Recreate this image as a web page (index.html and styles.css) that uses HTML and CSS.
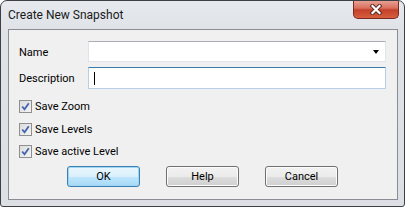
FILE: index.html
```html
<!DOCTYPE html>
<html lang="en">

<head>
    <meta charset="UTF-8">
    <title>Create New Snapshot</title>
    <link rel="stylesheet" href="styles.css">
</head>

<body>
    <div class="window">
        <div class="titlebar">
            <span class="title">Create New Snapshot</span>
            <button class="close">
                <svg width="14" height="11" viewBox="0 0 14 11">
                    <path d="M3.5 2 L10.5 9 M10.5 2 L3.5 9" stroke="#5a2a24" stroke-width="4" stroke-linecap="square"/>
                    <path d="M3.5 2 L10.5 9 M10.5 2 L3.5 9" stroke="#ffffff" stroke-width="2.2" stroke-linecap="square"/>
                </svg>
            </button>
        </div>
        <div class="panel">
            <div class="form">
                <label>Name</label>
                <div class="combo">
                    <span class="arrow"></span>
                </div>
                <label>Description</label>
                <div class="textbox focused"><span class="caret"></span></div>
            </div>
            <div class="checks">
                <div class="check"><span class="box"><svg width="9" height="9" viewBox="0 0 9 9"><path d="M1.2 4.5 L3.5 7.3 L7.8 1.2" fill="none" stroke="#4464b0" stroke-width="1.8"/></svg></span>Save Zoom</div>
                <div class="check"><span class="box"><svg width="9" height="9" viewBox="0 0 9 9"><path d="M1.2 4.5 L3.5 7.3 L7.8 1.2" fill="none" stroke="#4464b0" stroke-width="1.8"/></svg></span>Save Levels</div>
                <div class="check"><span class="box"><svg width="9" height="9" viewBox="0 0 9 9"><path d="M1.2 4.5 L3.5 7.3 L7.8 1.2" fill="none" stroke="#4464b0" stroke-width="1.8"/></svg></span>Save active Level</div>
            </div>
            <div class="buttons">
                <button class="btn default">OK</button>
                <button class="btn">Help</button>
                <button class="btn">Cancel</button>
            </div>
        </div>
    </div>
</body>

</html>
```

FILE: styles.css
```css
body {
    margin: 0;
    padding: 0;
    font-family: Roboto, "Open Sans", sans-serif;
    font-size: 11px;
    color: #000;
    background-color: #ffffff;
}

.window {
    width: 403px;
    height: 205px;
    border: 1px solid #3c3f44;
    border-radius: 7px 7px 3px 3px;
    background: linear-gradient(to bottom, #e6e9ee 0px, #dfe3e8 30px, #dcdfe3 100%);
    display: flex;
    flex-direction: column;
    overflow: hidden;
}

.titlebar {
    height: 28px;
    display: flex;
    justify-content: space-between;
    align-items: flex-start;
    padding-left: 7px;
    padding-right: 5px;
}

.title {
    font-size: 12px;
    margin-top: 7px;
    color: #1a1a1a;
}

.close {
    width: 46px;
    height: 19px;
    margin-top: -1px;
    border: 1px solid #7a2a20;
    border-top: none;
    border-radius: 0 0 5px 5px;
    background: linear-gradient(to bottom, #e9a79a 0%, #d9705d 45%, #c4402a 55%, #d5603f 100%);
    display: flex;
    align-items: center;
    justify-content: center;
    padding: 0;
}

.panel {
    margin: 0 6px 6px 7px;
    flex: 1;
    border: 1px solid #8a8e94;
    background-color: #f0f0f0;
    padding: 11px 10px 0 10px;
}

.form {
    display: grid;
    grid-template-columns: 69px 298px;
    row-gap: 5px;
    align-items: center;
}

.form label {
    display: block;
    padding-top: 1px;
}

.combo,
.textbox {
    height: 19px;
    background-color: #fff;
    position: relative;
}

.combo {
    border: 1px solid #e2e3ea;
    border-top-color: #abadb3;
}

.textbox.focused {
    height: 20px;
    border: 1px solid #b5cfe7;
    border-top-color: #3d7bad;
}

.arrow {
    position: absolute;
    right: 6px;
    top: 8px;
    border-left: 3.5px solid transparent;
    border-right: 3.5px solid transparent;
    border-top: 4px solid #000;
}

.caret {
    position: absolute;
    left: 5px;
    top: 4px;
    width: 1px;
    height: 13px;
    background-color: #000;
}

.checks {
    margin-top: 11px;
    display: flex;
    flex-direction: column;
    gap: 9.5px;
}

.check {
    display: flex;
    align-items: center;
    height: 13px;
}

.box {
    width: 11px;
    height: 11px;
    border: 1px solid #8e8f8f;
    background: linear-gradient(135deg, #dcdcdc, #f4f4f4);
    display: flex;
    align-items: center;
    justify-content: center;
    margin-right: 3px;
}

.buttons {
    margin-top: 8px;
    display: flex;
    gap: 26px;
    padding-left: 48px;
}

.btn {
    width: 73px;
    height: 21px;
    font-family: inherit;
    font-size: 11px;
    border: 1px solid #707070;
    border-radius: 3px;
    background: linear-gradient(to bottom, #f2f2f2 0%, #ebebeb 50%, #dddddd 51%, #cfcfcf 100%);
    padding: 0;
    box-shadow: inset 0 0 0 1px #fcfcfc;
}

.btn.default {
    border-color: #3c7fb1;
    background: linear-gradient(to bottom, #eaf6fd 0%, #d9f0fc 50%, #bee6fd 51%, #a7d9f5 100%);
    box-shadow: inset 0 0 0 1px #9ed5f3;
}
```
